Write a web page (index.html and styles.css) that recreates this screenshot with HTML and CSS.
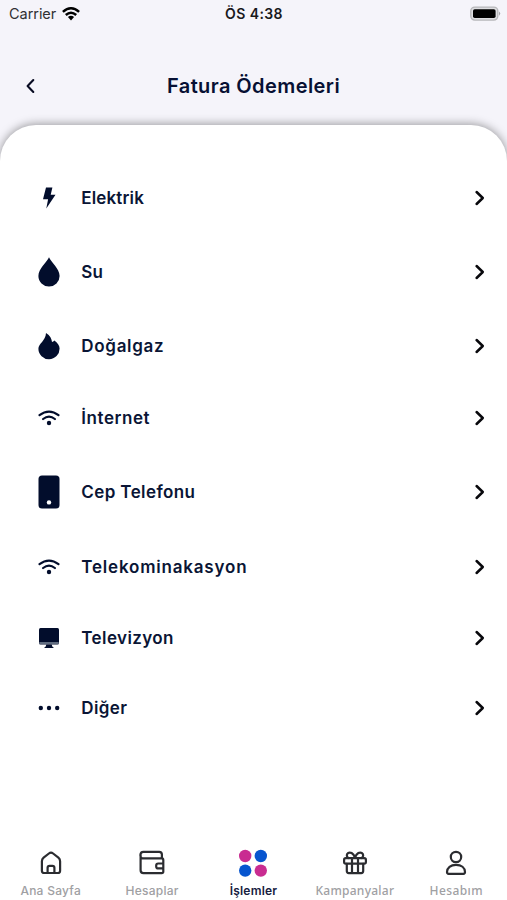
FILE: index.html
```html
<!DOCTYPE html>
<html lang="tr">
<head>
<meta charset="utf-8">
<title>Fatura Ödemeleri</title>
<link rel="stylesheet" href="styles.css">
</head>
<body>
<svg class="defs" aria-hidden="true">
  <symbol id="chevron" viewBox="0 0 12 18"><path d="M2.6 3l6.2 6-6.2 6" fill="none" stroke="#08080c" stroke-width="2.5" stroke-linecap="round" stroke-linejoin="round"/></symbol>
  <symbol id="wifi" viewBox="0 0 22 16"><g fill="none" stroke="currentColor" stroke-width="2.2" stroke-linecap="round"><path d="M1.5 5.1Q11-2 20.5 5.1M5.1 9Q11 4.4 16.9 9"/></g><circle cx="11" cy="13" r="2.2" fill="currentColor"/></symbol>
</svg>
<div class="screen">
  <header class="status">
    <div class="carrier"><span>Carrier</span>
      <svg width="18" height="14" viewBox="0 0 18 14"><g fill="none" stroke="#000" stroke-width="2.5"><path d="M.9 4.9Q9-2.3 17.1 4.9M3.8 8Q9 3.4 14.2 8"/></g><path d="M5.9 10.1Q9 7.6 12.1 10.1L9 13.4z"/></svg>
    </div>
    <div class="time">ÖS 4:38</div>
    <div class="power"><svg width="31" height="16" viewBox="0 0 31 16"><rect x=".8" y="1.1" width="27" height="13" rx="4" fill="#dedee1" stroke="#b7b7ba" stroke-width="1.4"/><rect x="3" y="3.2" width="22.6" height="8.8" rx="1.7"/><path d="M29 5.4q2.4 2.2 0 4.4z" fill="#a5a5a9"/></svg></div>
  </header>
  <div class="titlebar">
    <svg class="back" width="12" height="18" viewBox="0 0 12 18"><path d="M9.3 3.1L3.6 9l5.7 5.9" fill="none" stroke="#080b22" stroke-width="2.1" stroke-linecap="round" stroke-linejoin="round"/></svg>
    <h1>Fatura Ödemeleri</h1>
  </div>
  <main class="sheet">
    <ul class="list">
      <li class="row"><svg class="icon" width="14" height="22" viewBox="0 0 14 22"><path d="M4 .5h6.4L8.7 7.8h4.8L4.3 21.4l1.8-9.2H1z" fill="currentColor"/></svg><span class="label elektrik">Elektrik</span><svg class="go"><use href="#chevron"/></svg></li>
      <li class="row row-su"><svg class="icon" width="22" height="30" viewBox="0 0 22 30"><path d="M11 .3C9.3 4.7.4 11.7.4 19a10.6 10.6 0 0 0 21.2 0C21.6 11.7 12.7 4.7 11 .3z" fill="currentColor"/></svg><span class="label su">Su</span><svg class="go"><use href="#chevron"/></svg></li>
      <li class="row row-gas"><svg class="icon" width="22" height="28" viewBox="0 0 22 28"><path d="M8 .9c4.2 2.7 5.7 5.7 6 9.2.9-.3 1.7-.9 2.4-1.6 3 2.2 5.2 4.9 5.2 8.1a10.6 10.6 0 0 1-21.2.2C.4 11.6 7.7 8.6 8 .9z" fill="currentColor"/></svg><span class="label gaz">Doğalgaz</span><svg class="go"><use href="#chevron"/></svg></li>
      <li class="row row-net"><svg class="icon" width="22" height="16"><use href="#wifi"/></svg><span class="label internet">İnternet</span><svg class="go"><use href="#chevron"/></svg></li>
      <li class="row row-phone"><svg class="icon" width="22" height="34" viewBox="0 0 22 34"><rect x=".5" y=".4" width="21" height="33.2" rx="3.5" fill="currentColor"/><circle cx="11" cy="27.4" r="2.2" fill="#fff"/></svg><span class="label cep">Cep Telefonu</span><svg class="go"><use href="#chevron"/></svg></li>
      <li class="row row-tel"><svg class="icon" width="22" height="16"><use href="#wifi"/></svg><span class="label telekom">Telekominakasyon</span><svg class="go"><use href="#chevron"/></svg></li>
      <li class="row"><svg class="icon" width="22" height="22" viewBox="0 0 22 22"><rect x="1" y="1" width="20" height="16.4" rx="1.5" fill="currentColor"/><path d="M1.3 16h19.4" stroke="#aebac5" stroke-width="1.1"/><path d="M8.3 17.6h5.4l.6 1.9 1.7 1.5H6l1.7-1.5z" fill="currentColor"/></svg><span class="label tv">Televizyon</span><svg class="go"><use href="#chevron"/></svg></li>
      <li class="row"><svg class="icon" width="22" height="6" viewBox="0 0 22 6"><g fill="currentColor"><circle cx="2.8" cy="3" r="2.2"/><circle cx="11" cy="3" r="2.2"/><circle cx="19.2" cy="3" r="2.2"/></g></svg><span class="label diger">Diğer</span><svg class="go"><use href="#chevron"/></svg></li>
    </ul>
  </main>
  <nav class="tabs">
    <a class="tab"><svg width="28" height="28" viewBox="0 0 28 28"><path d="M4.9 12.2c0-1.6.5-2.5 1.7-3.5l5.3-4.2c1.4-1.1 2.8-1.1 4.2 0l5.3 4.2c1.2 1 1.7 1.9 1.7 3.5v9.5c0 1.5-.8 2.3-2.3 2.3H7.2c-1.5 0-2.3-.8-2.3-2.3zM10.6 24v-5.2c0-1.3.7-2 2-2h2.8c1.3 0 2 .7 2 2V24"/></svg><span class="ana">Ana Sayfa</span></a>
    <a class="tab"><svg width="28" height="28" viewBox="0 0 28 28"><path d="M24.6 9.3H5.2C1.2 9.3 1.6 2.9 5.4 2.9h15.8q2.7 0 2.7 2.7v3.7M2.6 6.2v15.1q0 2.9 2.9 2.9h18.2q1.6 0 1.6-1.6V11q0-1.7-1.6-1.7M25.3 14.5h-5.1q-2 0-2 2v.9q0 2 2 2h5.1"/></svg><span class="hesaplar">Hesaplar</span></a>
    <a class="tab active"><svg width="30" height="28" viewBox="0 0 30 28"><circle cx="7.2" cy="7" r="6.2" fill="#c92c91"/><circle cx="22.8" cy="7" r="6.2" fill="#0755cf"/><circle cx="7.2" cy="21.6" r="6.2" fill="#0755cf"/><circle cx="22.8" cy="21.6" r="6.2" fill="#c92c91"/></svg><span class="islemler">İşlemler</span></a>
    <a class="tab"><svg width="28" height="28" viewBox="0 0 28 28"><rect x="3.1" y="9.1" width="21.8" height="5.6" rx="1.7"/><path d="M5.8 14.8v7.3q0 2 2 2h12.4q2 0 2-2v-7.3M11 9.2V24M17 9.2V24M14 8.5C12.3 4.1 9.1 2.5 7 4.2 5.2 5.7 5.6 7.6 7.2 9M14 8.5c1.7-4.4 4.9-6 7-4.3 1.8 1.5 1.4 3.4-.2 4.8"/></svg><span class="kampanyalar">Kampanyalar</span></a>
    <a class="tab"><svg width="28" height="28" viewBox="0 0 28 28"><circle cx="14" cy="8" r="5.2"/><path d="M5 23.1c0-4.4 3.7-7.2 9-7.2s9 2.8 9 7.2c0 1.2-.5 1.7-1.6 1.7H6.6c-1.1 0-1.6-.5-1.6-1.7z"/></svg><span class="hesabim">Hesabım</span></a>
  </nav>
</div>
</body>
</html>
```

FILE: styles.css
```css
* { box-sizing: border-box; }
body { margin: 0; background: #f5f4fa; font-family: Inter, "Noto Sans", sans-serif; }
.defs { position: absolute; width: 0; height: 0; }
.screen { height: 900px; display: flex; flex-direction: column; overflow: hidden; }
.status { height: 28px; display: grid; grid-template-columns: 1fr auto 1fr; align-items: center; padding: 0 6px 1px 9px; font-size: 14.5px; color: #303033; }
.carrier { display: flex; align-items: center; gap: 5.5px; }
.carrier span { letter-spacing: -.05px; }
.time { font-weight: 600; font-size: 14px; color: #19191c; letter-spacing: .4px; margin-right: 2px; }
.power { display: flex; justify-content: flex-end; }
.titlebar { height: 97px; padding: 40px 24px 0; display: grid; grid-template-columns: 12px 1fr 12px; align-items: start; }
.back { margin-top: 9px; }
h1 { margin: 0; text-align: center; font-size: 20px; line-height: 36px; font-weight: 600; color: #071033; letter-spacing: .42px; }
.sheet { flex: 1; background: #fff; border-radius: 36px 36px 0 0; padding-top: 38px; box-shadow: 0 -1px 10px rgba(0, 0, 0, .38); }
.list { list-style: none; margin: 0; padding: 0 21.5px 0 38.3px; color: #020d2c; }
.row { height: 70px; display: grid; grid-template-columns: 22px 1fr 12px; column-gap: 21px; align-items: center; }
.row-su { height: 77px; }
.row-gas { height: 72px; }
.row-net { height: 71px; }
.row-phone { height: 78px; }
.row-tel { height: 72px; }
.icon { justify-self: center; display: block; }
.go { width: 12px; height: 18px; }
.label { font-size: 17px; font-weight: 600; line-height: 26px; color: #0a1535; letter-spacing: .4px; }
.elektrik, .su { letter-spacing: .15px; }
.gaz { letter-spacing: .7px; }
.internet { letter-spacing: .55px; }
.telekom { letter-spacing: .8px; }
.tabs { height: 60px; padding-top: 9px; background: #fff; display: grid; grid-template-columns: repeat(5, 1fr); }
.tab { display: flex; flex-direction: column; align-items: center; gap: 6px; font-size: 12px; font-weight: 500; line-height: 16px; color: #a0a0a3; letter-spacing: .25px; }
.tab svg { fill: none; stroke: #2b2c30; stroke-width: 2.2; stroke-linecap: round; stroke-linejoin: round; }
.tab.active { color: #17203f; font-weight: 600; letter-spacing: .2px; }
.active svg { stroke: none; }
.kampanyalar, .hesabim { font-family: "Noto Sans", sans-serif; }
.hesabim { letter-spacing: .4px; }
```
